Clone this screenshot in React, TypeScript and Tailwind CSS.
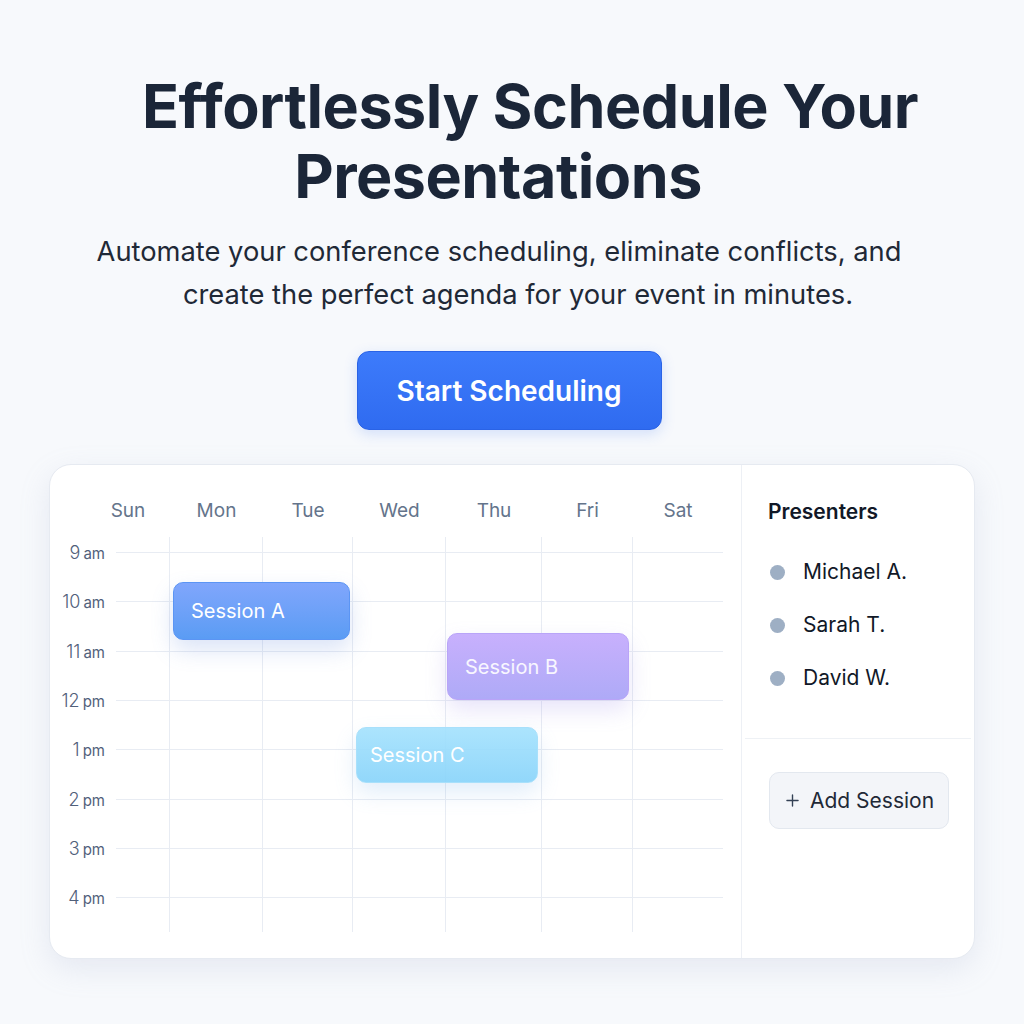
import { Plus } from 'lucide-react';

const days = ['Sun', 'Mon', 'Tue', 'Wed', 'Thu', 'Fri', 'Sat'];

const hours = [
  { n: '9', s: 'am' },
  { n: '10', s: 'am' },
  { n: '11', s: 'am' },
  { n: '12', s: 'pm' },
  { n: '1', s: 'pm' },
  { n: '2', s: 'pm' },
  { n: '3', s: 'pm' },
  { n: '4', s: 'pm' },
];

const presenters = ['Michael A.', 'Sarah T.', 'David W.'];

// column widths follow the grid in the mock, not equal splits
const cols = 'grid-cols-[84px_93px_90px_93px_96px_91px_90px]';

export default function App() {
  return (
    <div className="min-h-screen bg-[#f7f9fc] flex flex-col items-center font-['Inter',sans-serif] text-[#1e293b]">
      {/* Hero */}
      <h1 className="mt-[71px] text-center text-[61px] leading-[70px] font-bold tracking-[-0.5px] text-[#1b2638]">
        <span className="block pl-[36px]">Effortlessly Schedule Your</span>
        <span className="block pr-[28px]">Presentations</span>
      </h1>

      <p className="mt-[19px] text-center text-[27.3px] leading-[43px] text-[#1f2937]">
        <span className="block pr-[26px]">Automate your conference scheduling, eliminate conflicts, and</span>
        <span className="block pl-[12px]">create the perfect agenda for your event in minutes.</span>
      </p>

      <button className="mt-[35px] mr-[6px] w-[305px] h-[79px] rounded-[12px] bg-gradient-to-b from-[#3d7bfb] to-[#2f6bf0] border border-[#2a63e6] text-white text-[28px] font-semibold shadow-[0_4px_14px_rgba(47,107,240,0.18)]">
        Start Scheduling
      </button>

      {/* Calendar card */}
      <div className="mt-[34px] w-[926px] flex rounded-[22px] bg-white border border-[#e6eaf1] shadow-[0_10px_30px_rgba(148,163,196,0.18)]">
        <div className="flex-1 pt-[29px] pb-[26px] pr-[18px]">
          <div className={`ml-[36px] h-[34px] grid ${cols} items-center text-center text-[19px] text-[#64748b]`}>
            {days.map((d) => (
              <div key={d}>{d}</div>
            ))}
          </div>

          <div className="relative pb-[10px]">
            {/* vertical grid lines */}
            <div className={`absolute left-[36px] right-0 top-[9px] bottom-0 grid ${cols}`}>
              {days.map((d, i) => (
                <div key={d} className={i < 6 ? 'border-r border-[#e8ecf3]' : ''} />
              ))}
            </div>

            {hours.map((h) => (
              <div key={h.n + h.s} className="relative flex items-center h-[49.3px]">
                <div className="w-[55px] text-right text-[#51607a] whitespace-nowrap">
                  <span className="text-[18px] font-light">{h.n}</span>
                  <span className="text-[15px] ml-[3px]">{h.s}</span>
                </div>
                <div className="ml-[11px] flex-1 h-px bg-[#e8ecf3]" />
              </div>
            ))}

            {/* sessions */}
            <div className="absolute left-[123px] top-[54px] w-[177px] h-[58px] rounded-[10px] border border-[#5b95f4] bg-gradient-to-b from-[#80a6fc] to-[#5a9cf4] shadow-[0_10px_22px_rgba(90,130,220,0.22)] flex items-center pl-[17px] text-white text-[20px]">
              Session A
            </div>
            <div className="absolute left-[397px] top-[105px] w-[182px] h-[67px] rounded-[10px] border border-[#b9a4f8] bg-gradient-to-b from-[#c8b0fd] to-[#aeaaf7] shadow-[0_10px_22px_rgba(150,130,230,0.22)] flex items-center pl-[17px] text-white/90 text-[20px]">
              Session B
            </div>
            <div className="absolute left-[306px] top-[199px] w-[182px] h-[56px] rounded-[10px] border border-[#a8e0fb] bg-gradient-to-b from-[#a2e1fd]/90 to-[#86d3fa]/90 shadow-[0_10px_22px_rgba(110,170,230,0.2)] flex items-center pl-[13px] text-white text-[20px]">
              Session C
            </div>
          </div>
        </div>

        {/* Presenters */}
        <div className="w-[235px] border-l border-[#edf0f5] flex flex-col">
          <div className="pl-[26px] pt-[33px]">
            <div className="text-[21px] font-semibold text-[#111827] leading-[28px]">Presenters</div>
            <ul className="mt-[30px] flex flex-col gap-[21px]">
              {presenters.map((p) => (
                <li key={p} className="flex items-center h-[32px]">
                  <span className="w-[15px] h-[15px] rounded-full bg-[#9eafc4] ml-[2px]" />
                  <span className="ml-[18px] text-[21px] text-[#111827]">{p}</span>
                </li>
              ))}
            </ul>
          </div>
          <div className="mt-[44px] mx-[3px] h-px bg-[#eef1f5]" />
          <div className="pl-[27px] pt-[33px]">
            <button className="w-[180px] h-[57px] rounded-[10px] bg-[#f3f5f9] border border-[#e3e8ef] flex items-center pl-[13px] text-[21px] text-[#1f2937]">
              <Plus className="w-[19px] h-[19px] text-[#334155]" strokeWidth={1.75} />
              <span className="ml-[8px]">Add Session</span>
            </button>
          </div>
        </div>
      </div>
    </div>
  );
}
